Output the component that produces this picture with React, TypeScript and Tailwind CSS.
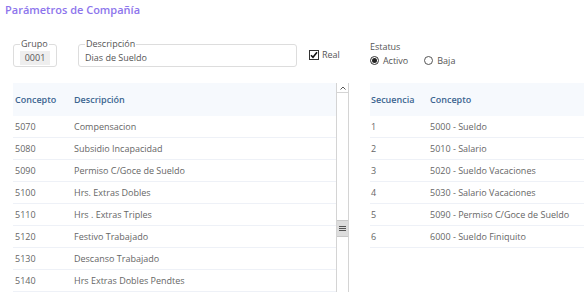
const conceptos = [
  ['5070', 'Compensacion'],
  ['5080', 'Subsidio Incapacidad'],
  ['5090', 'Permiso C/Goce de Sueldo'],
  ['5100', 'Hrs. Extras Dobles'],
  ['5110', 'Hrs . Extras Triples'],
  ['5120', 'Festivo Trabajado'],
  ['5130', 'Descanso Trabajado'],
  ['5140', 'Hrs Extras Dobles Pendtes'],
];

const secuencia = [
  ['1', '5000 - Sueldo'],
  ['2', '5010 - Salario'],
  ['3', '5020 - Sueldo Vacaciones'],
  ['4', '5030 - Salario Vacaciones'],
  ['5', '5090 - Permiso C/Goce de Sueldo'],
  ['6', '6000 - Sueldo Finiquito'],
];

export default function App() {
  return (
    <div className="w-[584px] h-[292px] overflow-hidden bg-white text-[9px] text-[#666]" style={{ fontFamily: '"Open Sans", sans-serif' }}>
      <h1 className="pl-[5px] pt-[2px] h-[20px] text-[11px] font-semibold text-[#8d75ec]">Parámetros de Compañía</h1>

      <div className="flex items-start mt-[19px] h-[40px]">
        <fieldset className="ml-[13px] w-[44px] min-w-0 h-[28px] border border-[#ddd] rounded-[3px] px-[6px]">
          <legend className="px-[1px] text-[9px] leading-[10px] text-[#555]">Grupo</legend>
          <div className="w-[30px] h-[14px] bg-[#eee] text-center leading-[14px] text-[#555] mt-[2px]">0001</div>
        </fieldset>
        <fieldset className="ml-[21px] w-[219px] min-w-0 h-[28px] border border-[#ddd] rounded-[3px] px-[6px]">
          <legend className="px-[1px] text-[9px] leading-[10px] text-[#555]">Descripción</legend>
          <div className="h-[14px] leading-[14px] text-[#555] mt-[2px]">Dias de Sueldo</div>
        </fieldset>
        <label className="ml-[12px] mt-[9px] flex items-center gap-[3px] text-[#555]">
          <span className="w-[10px] h-[10px] border border-[#333] bg-white flex items-center justify-center">
            <svg width="8" height="8" viewBox="0 0 8 8"><path d="M1 4.2 L3 6.3 L7 1.3" fill="none" stroke="#111" strokeWidth="1.6" /></svg>
          </span>
          Real
        </label>
        <div className="ml-[30px] mt-[2px] text-[#555]">
          <div className="leading-[12px]">Estatus</div>
          <div className="flex items-center mt-[1px]">
            <span className="w-[9px] h-[9px] rounded-full border border-[#333] flex items-center justify-center">
              <span className="w-[5px] h-[5px] rounded-full bg-[#222]" />
            </span>
            <span className="ml-[4px]">Activo</span>
            <span className="ml-[16px] w-[9px] h-[9px] rounded-full border border-[#555]" />
            <span className="ml-[4px]">Baja</span>
          </div>
        </div>
      </div>

      <div className="flex mt-[4px]">
        <div className="ml-[13px] w-[323px]">
          <div className="flex h-[33px] items-center bg-[#f6f9fd] font-semibold text-[#3b6590]">
            <div className="w-[61px] pl-[2px]">Concepto</div>
            <div>Descripción</div>
          </div>
          {conceptos.map(([c, d]) => (
            <div key={c} className="flex h-[22px] items-center border-b border-[#eef1f7]">
              <div className="w-[61px] pl-[2px]">{c}</div>
              <div>{d}</div>
            </div>
          ))}
        </div>
        <div className="w-[13px] h-[212px] border-x border-[#d4d4d4] bg-white relative">
          <div className="h-[10px] border-b border-[#d4d4d4] flex items-center justify-center">
            <svg width="6" height="4" viewBox="0 0 6 4"><path d="M0.5 3.5 L3 1 L5.5 3.5" fill="none" stroke="#555" strokeWidth="1" /></svg>
          </div>
          <div className="absolute left-0 right-0 top-[137px] h-[17px] bg-[#ddd] border-y border-[#c8c8c8] flex flex-col items-center justify-center gap-[1px]">
            <span className="w-[7px] h-[1px] bg-[#555]" />
            <span className="w-[7px] h-[1px] bg-[#555]" />
            <span className="w-[7px] h-[1px] bg-[#555]" />
          </div>
        </div>
        <div className="ml-[21px] flex-1">
          <div className="flex h-[33px] items-center bg-[#f6f9fd] font-semibold text-[#3b6590]">
            <div className="w-[60px] pl-[1px]">Secuencia</div>
            <div>Concepto</div>
          </div>
          {secuencia.map(([s, c]) => (
            <div key={s} className="flex h-[22px] items-center border-b border-[#eef1f7]">
              <div className="w-[60px] pl-[1px]">{s}</div>
              <div>{c}</div>
            </div>
          ))}
        </div>
      </div>
    </div>
  );
}
